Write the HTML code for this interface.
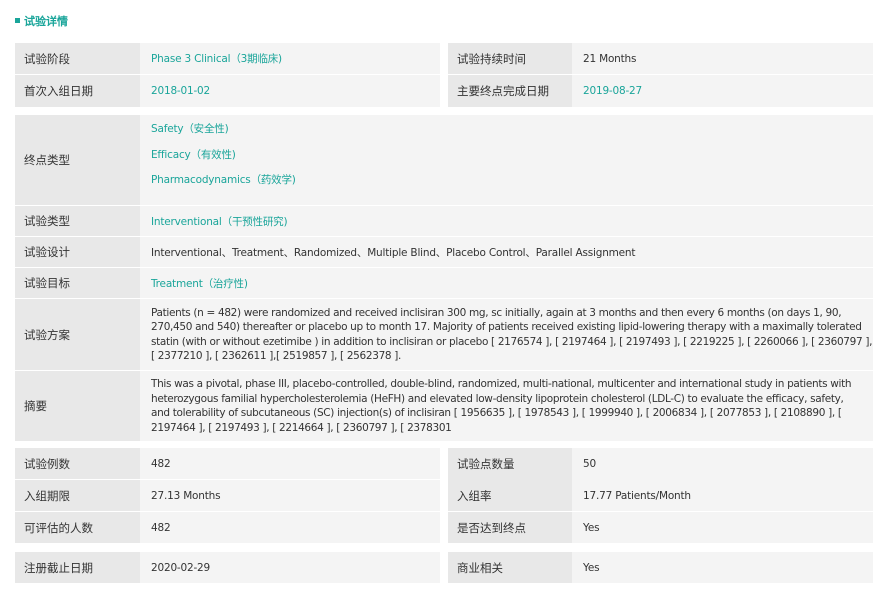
<!DOCTYPE html>
<html><head><meta charset="utf-8"><style>
body{margin:0;width:884px;height:591px;background:#fff;font-family:"DejaVu Sans","WenQuanYi Zen Hei",sans-serif;font-size:10.5px;letter-spacing:-0.2px;color:#333;position:relative;overflow:hidden}
div{box-sizing:border-box}
.c{position:absolute;padding-left:9px;display:flex;align-items:center}
.l{background:#e8e8e8;font-size:11.5px;letter-spacing:0}
.v{background:#f4f4f4;padding-left:11px}
.t{color:#1aa59a}
.m{line-height:14.5px;padding-right:0;white-space:nowrap;overflow:hidden;letter-spacing:-0.33px}
</style></head><body>
<div style="position:absolute;left:15px;top:18px;width:5px;height:5px;background:#1aa59a"></div>
<div style="position:absolute;left:24px;top:13px;font-weight:bold;color:#1aa59a;font-size:11px;letter-spacing:0">试验详情</div>

<div class="c l" style="left:15px;top:43px;width:125px;height:31px">试验阶段</div>
<div class="c v t" style="left:140px;top:43px;width:300px;height:31px">Phase 3 Clinical（3期临床)</div>
<div class="c l" style="left:448px;top:43px;width:124px;height:31px">试验持续时间</div>
<div class="c v" style="left:572px;top:43px;width:301px;height:31px">21 Months</div>
<div class="c l" style="left:15px;top:75px;width:125px;height:32px">首次入组日期</div>
<div class="c v t" style="left:140px;top:75px;width:300px;height:32px">2018-01-02</div>
<div class="c l" style="left:448px;top:75px;width:124px;height:32px">主要终点完成日期</div>
<div class="c v t" style="left:572px;top:75px;width:301px;height:32px">2019-08-27</div>

<div class="c l" style="left:15px;top:115px;width:125px;height:90px">终点类型</div>
<div class="c v t" style="left:140px;top:115px;width:733px;height:90px;display:block;padding-top:2px;line-height:25.5px">Safety（安全性)<br>Efficacy（有效性)<br>Pharmacodynamics（药效学)</div>
<div class="c l" style="left:15px;top:206px;width:125px;height:30px">试验类型</div>
<div class="c v t" style="left:140px;top:206px;width:733px;height:30px">Interventional（干预性研究)</div>
<div class="c l" style="left:15px;top:237px;width:125px;height:30px">试验设计</div>
<div class="c v" style="left:140px;top:237px;width:733px;height:30px">Interventional、Treatment、Randomized、Multiple Blind、Placebo Control、Parallel Assignment</div>
<div class="c l" style="left:15px;top:268px;width:125px;height:30px">试验目标</div>
<div class="c v t" style="left:140px;top:268px;width:733px;height:30px">Treatment（治疗性)</div>
<div class="c l" style="left:15px;top:299px;width:125px;height:71px">试验方案</div>
<div class="c v m" style="left:140px;top:299px;width:733px;height:71px"><div>Patients (n = 482) were randomized and received inclisiran 300 mg, sc initially, again at 3 months and then every 6 months (on days 1, 90,<br>270,450 and 540) thereafter or placebo up to month 17. Majority of patients received existing lipid-lowering therapy with a maximally tolerated<br>statin (with or without ezetimibe ) in addition to inclisiran or placebo [ 2176574 ], [ 2197464 ], [ 2197493 ], [ 2219225 ], [ 2260066 ], [ 2360797 ],<br>[ 2377210 ], [ 2362611 ],[ 2519857 ], [ 2562378 ].</div></div>
<div class="c l" style="left:15px;top:371px;width:125px;height:70px">摘要</div>
<div class="c v m" style="left:140px;top:371px;width:733px;height:70px"><div>This was a pivotal, phase III, placebo-controlled, double-blind, randomized, multi-national, multicenter and international study in patients with<br>heterozygous familial hypercholesterolemia (HeFH) and elevated low-density lipoprotein cholesterol (LDL-C) to evaluate the efficacy, safety,<br>and tolerability of subcutaneous (SC) injection(s) of inclisiran [ 1956635 ], [ 1978543 ], [ 1999940 ], [ 2006834 ], [ 2077853 ], [ 2108890 ], [<br>2197464 ], [ 2197493 ], [ 2214664 ], [ 2360797 ], [ 2378301</div></div>

<div class="c l" style="left:15px;top:448px;width:125px;height:31px">试验例数</div>
<div class="c v" style="left:140px;top:448px;width:300px;height:31px">482</div>
<div class="c l" style="left:15px;top:480px;width:125px;height:31px">入组期限</div>
<div class="c v" style="left:140px;top:480px;width:300px;height:31px">27.13 Months</div>
<div class="l" style="position:absolute;left:448px;top:448px;width:124px;height:63px"></div>
<div class="c" style="left:448px;top:448px;width:124px;height:31px;font-size:11.5px;letter-spacing:0">试验点数量</div>
<div class="c" style="left:448px;top:480px;width:124px;height:31px;font-size:11.5px;letter-spacing:0">入组率</div>
<div style="position:absolute;left:572px;top:448px;width:301px;height:63px;background:#f4f4f4"></div>
<div class="c" style="left:574px;top:448px;width:299px;height:31px">50</div>
<div class="c" style="left:574px;top:480px;width:299px;height:31px">17.77 Patients/Month</div>
<div class="c l" style="left:15px;top:512px;width:125px;height:31px">可评估的人数</div>
<div class="c v" style="left:140px;top:512px;width:300px;height:31px">482</div>
<div class="c l" style="left:448px;top:512px;width:124px;height:31px">是否达到终点</div>
<div class="c v" style="left:572px;top:512px;width:301px;height:31px">Yes</div>

<div class="c l" style="left:15px;top:552px;width:125px;height:31px">注册截止日期</div>
<div class="c v" style="left:140px;top:552px;width:300px;height:31px">2020-02-29</div>
<div class="c l" style="left:448px;top:552px;width:124px;height:31px">商业相关</div>
<div class="c v" style="left:572px;top:552px;width:301px;height:31px">Yes</div>
</body></html>
